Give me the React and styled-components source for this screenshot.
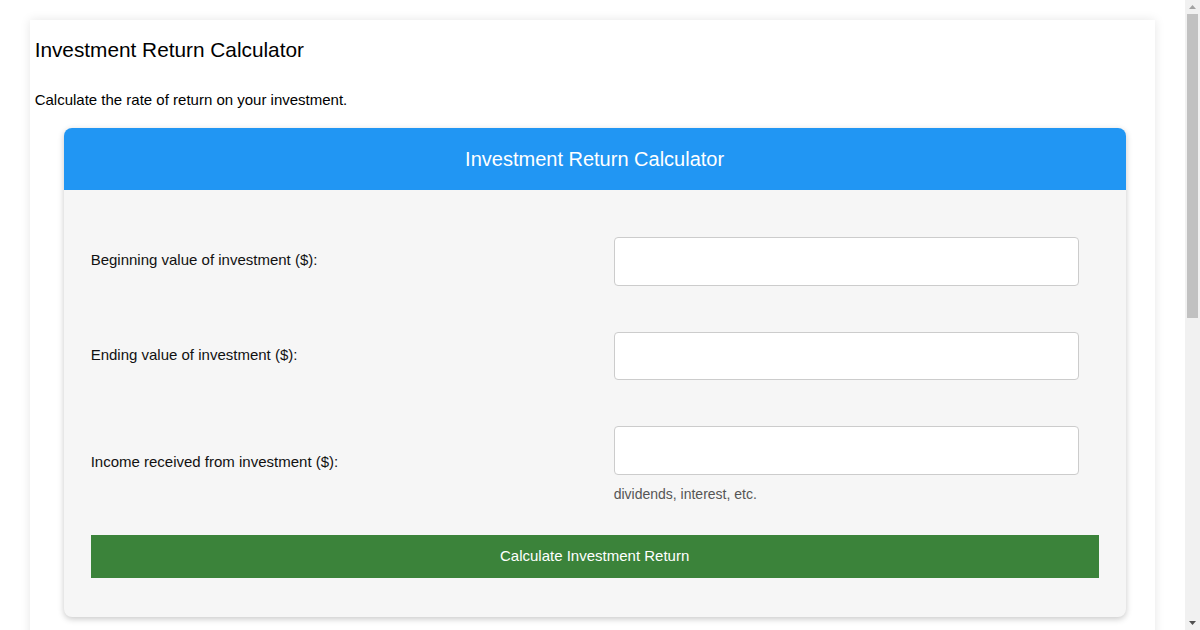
import React from "react";
import styled, { createGlobalStyle } from "styled-components";

const Global = createGlobalStyle`
  html, body { margin: 0; padding: 0; background: #ffffff; }
  body { font-family: "Liberation Sans", Arial, sans-serif; color: #000; }
  * { box-sizing: border-box; }
`;

const Page = styled.div`
  padding: 20px 15px 0 0;
`;

const Container = styled.div`
  width: 95%;
  margin: 0 auto;
  background: #fff;
  padding: 5px 5px 620px;
  box-shadow: 0 0 10px rgba(0, 0, 0, 0.1);
`;

const Title = styled.h1`
  font-size: 20.8px;
  font-weight: 400;
  line-height: 24px;
  margin: 13px 0 0;
`;

const Intro = styled.p`
  font-size: 15px;
  line-height: 17px;
  margin: 29px 0 20px;
`;

const Card = styled.div`
  width: 1062px;
  margin-left: 29px;
  background: #f6f6f6;
  border-radius: 8px;
  box-shadow: 0 2px 6px rgba(0, 0, 0, 0.22);
  overflow: hidden;
`;

const CardHeader = styled.div`
  background: #2196f3;
  color: #fff;
  height: 62px;
  display: flex;
  align-items: center;
  justify-content: center;
  font-size: 20px;
`;

const CardBody = styled.div`
  padding: 27px 27px 39px;
  display: flex;
  flex-direction: column;
`;

const Row = styled.div`
  display: grid;
  grid-template-columns: 1fr 1fr;
  align-items: center;
  padding: 20px 0;
  margin-bottom: 6px;
`;

const Label = styled.label`
  font-size: 15px;
  line-height: 17px;
  padding-bottom: 3px;
  color: #111;
`;

const Field = styled.div`
  padding: 0 20px 0 19px;
  display: flex;
  flex-direction: column;
`;

const Input = styled.input`
  height: 48.5px;
  width: 100%;
  border: 1px solid #ccc;
  border-radius: 4px;
  background: #fff;
  font-size: 16px;
  padding: 12px;
  outline: none;
`;

const Help = styled.span`
  font-size: 14px;
  line-height: 12px;
  color: #555;
  margin-top: 13px;
`;

const Button = styled.button`
  margin-top: 9px;
  height: 43px;
  width: 100%;
  border: none;
  background: #3b833a;
  color: #fff;
  font-family: "Liberation Sans", Arial, sans-serif;
  font-size: 15px;
  line-height: 17px;
  padding: 0 0 1px;
  cursor: pointer;
`;

const Scrollbar = styled.div`
  position: fixed;
  top: 0;
  right: 0;
  width: 15px;
  height: 100vh;
  background: #f1f1f1;
  display: flex;
  flex-direction: column;
  align-items: center;
`;

const Arrow = styled.div`
  height: 14px;
  width: 15px;
  display: flex;
  align-items: center;
  justify-content: center;
`;

const Thumb = styled.div`
  width: 11px;
  height: 304px;
  background: #c1c1c1;
`;

const Spacer = styled.div`
  flex: 1;
`;

const fields = [
  { label: "Beginning value of investment ($):" },
  { label: "Ending value of investment ($):" },
  { label: "Income received from investment ($):", help: "dividends, interest, etc." },
];

export default function App() {
  return (
    <>
      <Global />
      <Page>
        <Container>
          <Title>Investment Return Calculator</Title>
          <Intro>Calculate the rate of return on your investment.</Intro>
          <Card>
            <CardHeader>Investment Return Calculator</CardHeader>
            <CardBody>
              {fields.map((f) => (
                <Row key={f.label}>
                  <Label>{f.label}</Label>
                  <Field>
                    <Input type="text" />
                    {f.help && <Help>{f.help}</Help>}
                  </Field>
                </Row>
              ))}
              <Button>Calculate Investment Return</Button>
            </CardBody>
          </Card>
        </Container>
      </Page>
      <Scrollbar>
        <Arrow>
          <svg width="7" height="4" viewBox="0 0 7 4">
            <polygon points="0,4 7,4 3.5,0" fill="#a3a3a3" />
          </svg>
        </Arrow>
        <Thumb />
        <Spacer />
        <Arrow>
          <svg width="7" height="4" viewBox="0 0 7 4">
            <polygon points="0,0 7,0 3.5,4" fill="#505050" />
          </svg>
        </Arrow>
      </Scrollbar>
    </>
  );
}
